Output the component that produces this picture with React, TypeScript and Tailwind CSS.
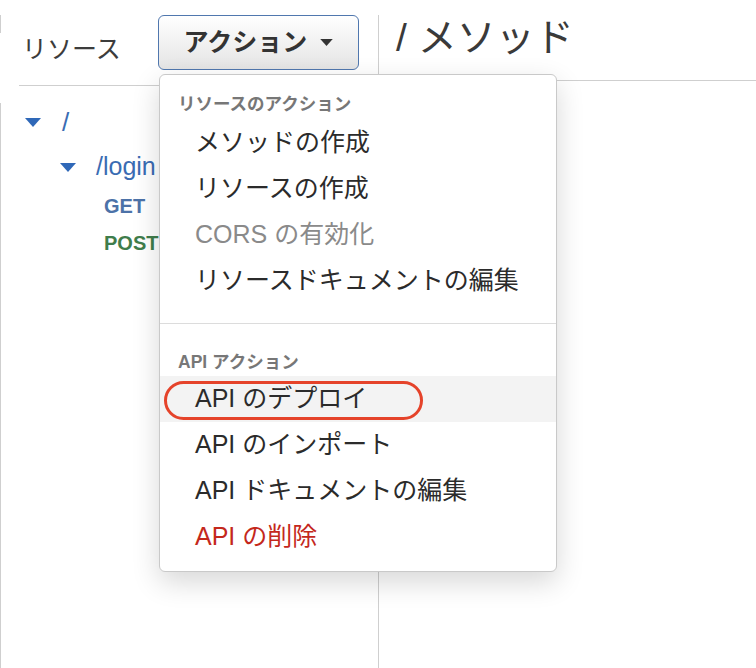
import React from "react";

const font = { fontFamily: '"Liberation Sans", "Noto Sans CJK JP", sans-serif' };

const Caret = ({ className }: { className?: string }) => (
  <svg width="16" height="9" viewBox="0 0 16 9" className={className}>
    <polygon points="0,0 16,0 8,9" fill="currentColor" />
  </svg>
);

type Item = { label: string; tone?: "muted" | "danger"; active?: boolean };

const resourceActions: Item[] = [
  { label: "メソッドの作成" },
  { label: "リソースの作成" },
  { label: "CORS の有効化", tone: "muted" },
  { label: "リソースドキュメントの編集" },
];

const apiActions: Item[] = [
  { label: "API のデプロイ", active: true },
  { label: "API のインポート" },
  { label: "API ドキュメントの編集" },
  { label: "API の削除", tone: "danger" },
];

const MenuItem = ({ item }: { item: Item }) => (
  <div
    className={`relative flex h-[46px] items-center pl-[35px] text-[25px] ${
      item.active ? "bg-[#f3f3f3]" : ""
    } ${
      item.tone === "muted"
        ? "text-[#8a8a8a]"
        : item.tone === "danger"
          ? "text-[#c4281c]"
          : "text-[#2b2b2b]"
    }`}
  >
    {item.label}
    {item.active && (
      // 赤い丸囲み（強調）
      <span className="absolute left-[4px] top-[5px] h-[39px] w-[259px] rounded-full border-[3px] border-[#e5432a]" />
    )}
  </div>
);

export default function App() {
  return (
    <div
      className="relative flex h-[668px] w-[756px] overflow-hidden bg-white pt-[15px]"
      style={font}
    >
      {/* 左カラム：リソース */}
      <div className="w-[379px] shrink-0 border-r border-[#cfcfcf]">
        <div className="flex h-[70px] items-start">
          <div className="h-[18px] w-px bg-[#cfcfcf]" />
          <span className="ml-[21px] mt-[19px] w-[136px] text-[25px] leading-[30px] text-[#3c3c3c]">
            リソース
          </span>
          <button className="flex h-[55px] w-[201px] items-center justify-center gap-[13px] rounded-[6px] border border-[#5077ae] bg-gradient-to-b from-white to-[#e4e4e4] text-[25px] font-bold text-[#333]">
            アクション
            <Caret className="h-[7px] w-[13px] text-[#333]" />
          </button>
        </div>
        <div className="ml-[19px] h-px bg-[#cfcfcf]" />

        <div className="mt-[17px] h-[600px] border-l border-[#cfcfcf] text-[#3a6cb3]">
          <div className="flex h-[38px] items-center pl-[24px]">
            <Caret className="text-[#2f68b8]" />
            <span className="ml-[21px] text-[26px] font-light">/</span>
          </div>
          <div className="flex h-[52px] items-center pl-[59px]">
            <Caret className="text-[#2f68b8]" />
            <span className="ml-[20px] text-[25px] font-light">/login</span>
          </div>
          <div className="flex h-[26px] items-center pl-[103px] text-[20px] font-bold text-[#4c72a8]">
            GET
          </div>
          <div className="flex h-[48px] items-center pl-[103px] text-[20px] font-bold text-[#3f7d4b]">
            POST
          </div>
        </div>
      </div>

      {/* 右カラム：メソッド */}
      <div className="flex-1">
        <div className="h-[66px] border-b border-[#cfcfcf] pl-[17px] text-[39px] leading-[46px] text-[#3a3a3a]">
          / メソッド
        </div>
      </div>

      {/* アクションメニュー */}
      <div className="absolute left-[159px] top-[74px] w-[398px] rounded-[6px] border border-[#c9c9c9] bg-white pb-[11px] pt-[15px] shadow-[0_10px_28px_rgba(0,0,0,0.16)]">
        <div className="flex h-[28px] items-center pl-[18px] text-[17.5px] font-bold text-[#777]">
          リソースのアクション
        </div>
        <div className="mt-[2px]">
          {resourceActions.map((item) => (
            <MenuItem key={item.label} item={item} />
          ))}
        </div>
        <div className="mt-[19px] h-px bg-[#dcdcdc]" />
        <div className="mt-[24px] flex h-[28px] items-center pl-[18px] text-[17.5px] font-bold text-[#777]">
          API アクション
        </div>
        <div>
          {apiActions.map((item) => (
            <MenuItem key={item.label} item={item} />
          ))}
        </div>
      </div>
    </div>
  );
}
